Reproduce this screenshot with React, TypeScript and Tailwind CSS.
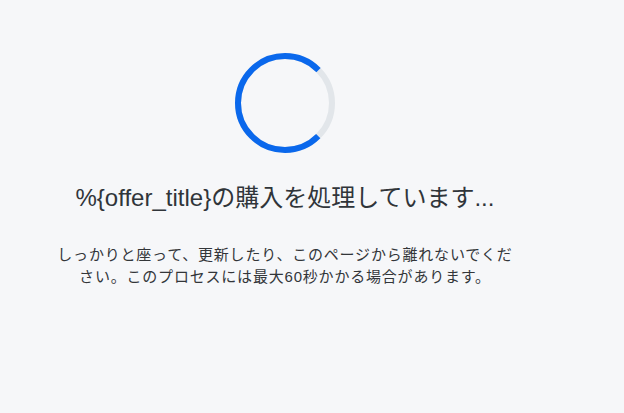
import React from 'react';

export default function App() {
  const title = '%{offer_title}の購入を処理しています...';
  const body =
    'しっかりと座って、更新したり、このページから離れないでください。このプロセスには最大60秒かかる場合があります。';

  return (
    <div
      className="min-h-[413px] w-full bg-[#f6f7f9]"
      style={{ fontFamily: '"Liberation Sans", "Noto Sans CJK JP", sans-serif' }}
    >
      <div className="flex w-[570px] flex-col items-center pt-[53px]">
        {/* Spinner */}
        <svg width="100" height="100" viewBox="0 0 100 100" className="shrink-0">
          <circle cx="50" cy="50" r="47" fill="none" stroke="#e2e6ea" strokeWidth="6" />
          <circle
            cx="50"
            cy="50"
            r="47"
            fill="none"
            stroke="#0a68ec"
            strokeWidth="6"
            strokeDasharray="221.5 295.3"
            transform="rotate(45 50 50)"
          />
        </svg>

        <h1 className="mt-[29px] text-[24px] leading-[32px] font-normal text-[#30353a]">{title}</h1>

        <p className="mt-[30px] w-[462px] text-center text-[15px] leading-[22px] tracking-[0.8px] text-[#333639]">
          {body}
        </p>
      </div>
    </div>
  );
}
